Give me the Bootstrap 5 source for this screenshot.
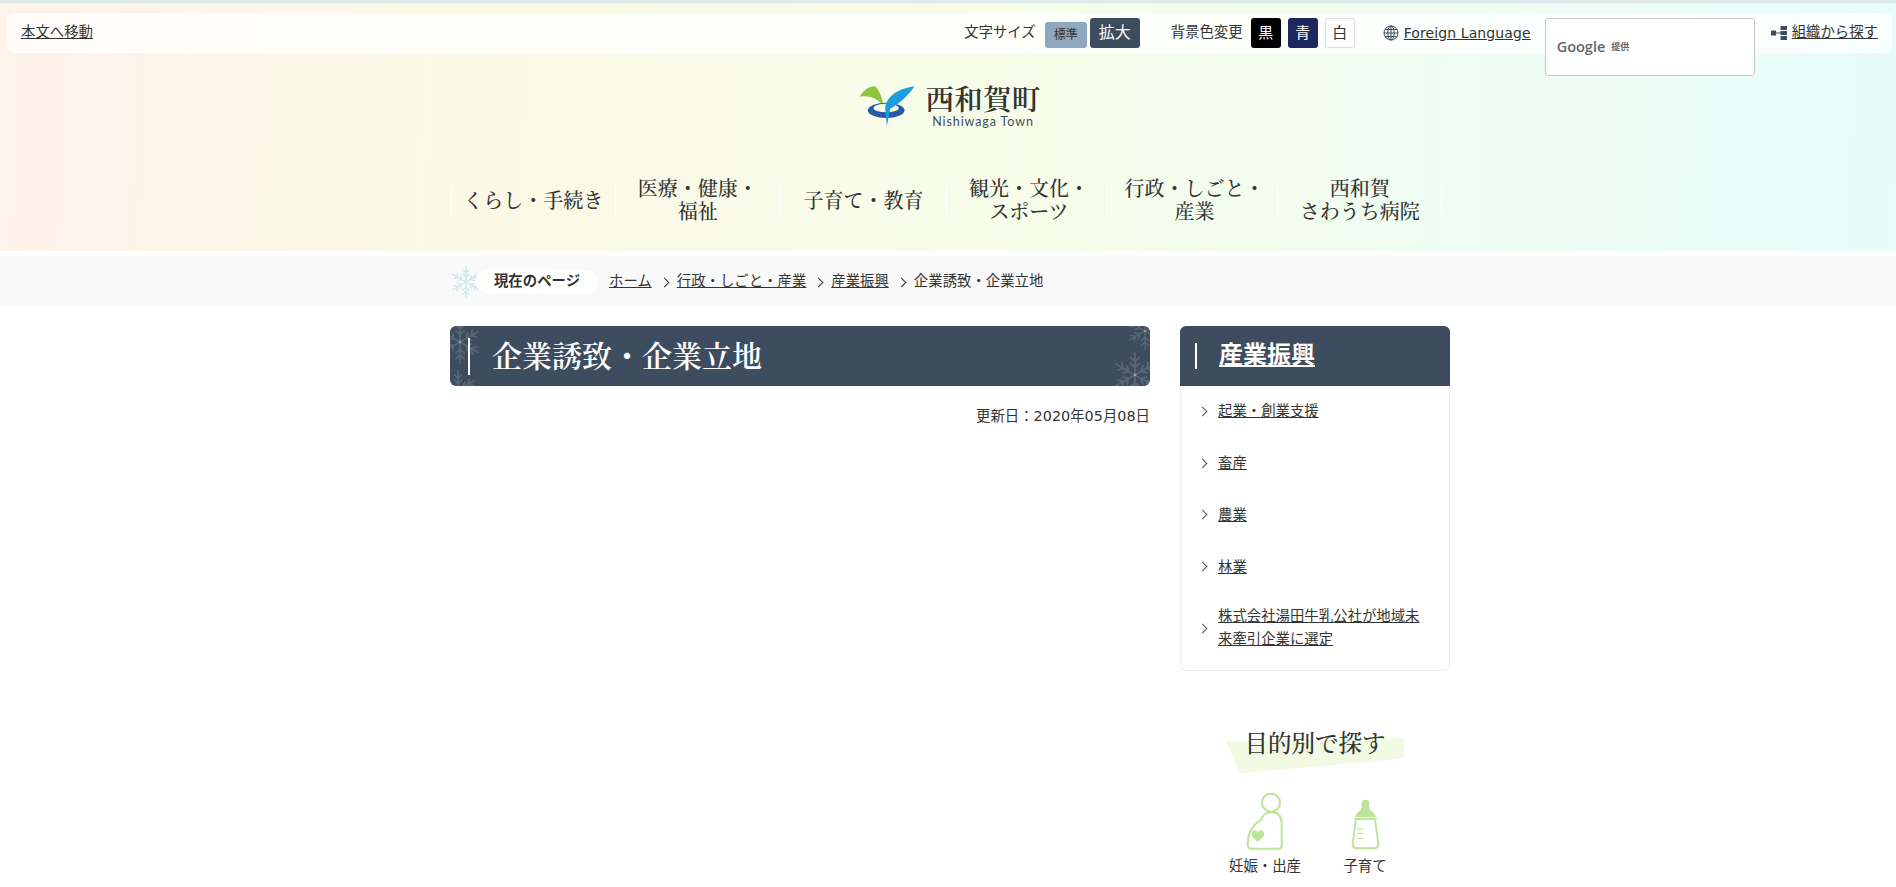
<!DOCTYPE html>
<html lang="ja">
<head>
  <meta charset="UTF-8" />
  <meta name="viewport" content="width=device-width, initial-scale=1.0"/>
  <title>企業誘致・企業立地 | 西和賀町</title>
  <link href="https://cdn.jsdelivr.net/npm/bootstrap@5.3.3/dist/css/bootstrap.min.css" rel="stylesheet" />
  <style>
    body { font-family: "DejaVu Sans", "Noto Sans CJK JP", sans-serif; font-size: 14.4px; color: #333; background: #fff; overflow-x: hidden; }
    a { color: #333; }
    .mincho { font-family: "Noto Serif CJK JP", "Liberation Serif", "Noto Sans CJK JP", serif; font-weight: 500; }

    .site-head { border-top: 3px solid #dcebea; height: 251px; padding-top: 10px; background: linear-gradient(92deg, #fff3ea 0%, #fbf9e6 25%, #f6fde9 55%, #e7fcfb 100%); }
    .util-bar { height: 40px; margin: 0 4px 0 7px; padding: 0 14px 0 14px; border-radius: 6px; background: rgba(255,255,255,.72); }
    .fs-group { margin-left: 9px; gap: 3px; height: 30px; }
    .fs-std, .fs-big, .bg-pick { display: flex; align-items: center; justify-content: center; border-radius: 3px; }
    .fs-std { width: 42px; height: 26px; background: #8fa7bf; font-size: 12px; color: #333; }
    .fs-big { width: 50px; height: 30px; background: #3d4d5f; color: #fff; font-size: 16px; }
    .bg-label { margin-left: 31px; }
    .bg-group { margin-left: 8px; gap: 7px; }
    .bg-pick { width: 30px; height: 30px; font-size: 15px; }
    .bg-black { background: #000; color: #fff; }
    .bg-navy { background: #1d2760; color: #fff; }
    .bg-white-btn { background: #fff; border: 1px solid #ddd; color: #333; }
    .lang-link { margin-left: 28px; gap: 5px; }
    .lang-link a { font-size: 14px; letter-spacing: .1px; }
    .search-box { width: 210px; height: 58px; margin: 5px 0 -23px 14px; padding-left: 11px; background: #fff; border: 1px solid #c8c8c8; border-radius: 3px; color: #666; gap: 6px; align-self: flex-start; }
    .search-box .g-word { font-family: "Open Sans", sans-serif; font-size: 14.5px; font-weight: 600; }
    .search-box .g-by { font-size: 9px; font-weight: 700; margin-top: 2px; }
    .org-link { margin-left: 16px; gap: 5px; }

    .logo-row { margin-top: 29px; height: 46px; gap: 8px; }
    .logo-name { font-size: 28.5px; line-height: 32px; font-weight: 600; color: #333; letter-spacing: .2px; }
    .logo-en { font-family: "Lato", sans-serif; font-size: 12.5px; line-height: 14px; letter-spacing: .9px; color: #3d4d5f; text-align: center; margin-top: 1px; }

    .page-wrap { width: 1000px; margin-left: calc(50% - 498px); }
    .gnav { margin-top: 58px; padding-left: 1px; }
    .gnav li { width: 165.6px; height: 31px; border-left: 1px solid #fff; display: flex; align-items: center; justify-content: center; text-align: center; font-size: 20px; line-height: 23px; color: #333; }
    .gnav li:first-child { width: 163.5px; }
    .gnav li:last-child { border-right: 1px solid #fff; }
    .gnav li span { display: block; padding: 0 0 5px; }

    .crumb-band { margin-top: 5px; height: 50px; background: #f9f9f9; padding-top: 1px; }
    .crumb-flake { width: 32px; height: 32px; color: #c9e8ea; }
    .crumb-title { margin-left: -6px; width: 122px; height: 23px; background: #fff; border-radius: 12px; font-weight: 700; font-size: 14.4px; display: flex; align-items: center; justify-content: center; }
    .crumb-band .breadcrumb { margin: 0 0 0 11px; --bs-breadcrumb-item-padding-x: 25px; }
    .crumb-band .breadcrumb-item { position: relative; }
    .crumb-band .breadcrumb-item + .breadcrumb-item::before { content: ""; position: absolute; left: 9px; top: 8px; padding: 0; width: 7px; height: 7px; border-top: 1.5px solid #333; border-right: 1.5px solid #333; transform: rotate(45deg); }
    .crumb-band .breadcrumb-item.active { color: #333; }

    .main-col { width: 700px; padding-top: 20px; }
    .side-col { width: 270px; padding-top: 20px; }
    .page-title { position: relative; height: 60px; margin: 0; background: #3d4d5f; border-radius: 6px; overflow: hidden; color: #fff; font-size: 30px; font-weight: 600; line-height: 56px; padding-left: 42px; }
    .page-title::before { content: ""; position: absolute; left: 18px; top: 12px; width: 2px; height: 37px; background: #fff; }
    .title-flake { position: absolute; color: rgba(255,255,255,.14); }
    .flake-a { left: -12px; top: -6px; width: 44px; height: 44px; }
    .flake-b { left: -12px; bottom: -24px; width: 40px; height: 40px; }
    .flake-c { right: -14px; top: -14px; width: 38px; height: 38px; }
    .flake-d { right: -8px; bottom: -12px; width: 46px; height: 46px; }
    .update-date { margin-top: 20px; text-align: right; font-size: 14.4px; line-height: 21px; }

    .side-box { border-radius: 6px; }
    .side-head { position: relative; height: 60px; background: #3d4d5f; border-radius: 6px 6px 0 0; padding-left: 39px; line-height: 58px; font-size: 24px; font-weight: 700; }
    .side-head::before { content: ""; position: absolute; left: 15px; top: 17px; width: 2px; height: 26px; background: #fff; }
    .side-head a { color: #fff; }
    .side-list { border: 1px solid #eee; border-top: 0; border-radius: 0 0 6px 6px; padding-bottom: 4px; }
    .side-list .list-group-item { border: 0; background: none; padding: 14.4px 20px 14.4px 37px; line-height: 23px; position: relative; }
    .side-list .list-group-item:last-child { padding-top: 12px; }
    .side-list .list-group-item::before { content: ""; position: absolute; left: 18px; top: 50%; width: 7px; height: 7px; margin-top: -4px; border-top: 1.5px solid #555; border-right: 1.5px solid #555; transform: rotate(45deg); }

    .purpose-head { position: relative; margin-top: 54px; text-align: center; font-size: 23.5px; line-height: 34px; color: #333; }
    .purpose-head span { position: relative; }
    .purpose-head::before { content: ""; position: absolute; left: 46px; top: 13px; width: 178px; height: 36px; background: #f2fae3; clip-path: polygon(0 11%, 100% 0, 100% 58%, 8% 100%); }
    .purpose-row { margin-top: 32px; }
    .purpose-item { width: 100px; text-align: center; }
    .purpose-icon { height: 60px; display: flex; align-items: flex-end; justify-content: center; }
    .purpose-label { margin-top: 5px; line-height: 20px; }
  </style>
</head>
<body>
  <svg width="0" height="0" class="d-block position-absolute">
    <defs>
      <g id="arm">
        <path d="M0 0V-48M0 -16L-9 -25M0 -16L9 -25M0 -29L-9 -38M0 -29L9 -38" fill="none" stroke="currentColor" stroke-width="4" stroke-linecap="round"/>
      </g>
      <symbol id="flake" viewBox="-50 -50 100 100">
        <use href="#arm"/>
        <use href="#arm" transform="rotate(60)"/>
        <use href="#arm" transform="rotate(120)"/>
        <use href="#arm" transform="rotate(180)"/>
        <use href="#arm" transform="rotate(240)"/>
        <use href="#arm" transform="rotate(300)"/>
      </symbol>
    </defs>
  </svg>

  <header class="site-head">
    <div class="util-bar d-flex align-items-center">
      <a href="#main">本文へ移動</a>
      <span class="ms-auto">文字サイズ</span>
      <div class="fs-group d-flex align-items-end">
        <span class="fs-std">標準</span>
        <span class="fs-big">拡大</span>
      </div>
      <span class="bg-label">背景色変更</span>
      <div class="bg-group d-flex">
        <span class="bg-pick bg-black">黒</span>
        <span class="bg-pick bg-navy">青</span>
        <span class="bg-pick bg-white-btn">白</span>
      </div>
      <div class="lang-link d-flex align-items-center">
        <svg width="16" height="16" viewBox="0 0 16 16" fill="none" stroke="#3d4d5f" stroke-width="1"><circle cx="8" cy="8" r="7"/><ellipse cx="8" cy="8" rx="3.2" ry="7"/><path d="M1 8H15M2 4.5H14M2 11.5H14M8 1V15"/></svg>
        <a href="#">Foreign Language</a>
      </div>
      <div class="search-box d-flex align-items-center">
        <span class="g-word">Google</span><span class="g-by">提供</span>
      </div>
      <div class="org-link d-flex align-items-center">
        <svg width="16" height="16" viewBox="0 0 16 16" fill="#3d4d5f"><rect x="0" y="5.5" width="5" height="5"/><rect x="5" y="7.5" width="5" height="1"/><rect x="9.5" y="1" width="6.5" height="4"/><rect x="9.5" y="6" width="6.5" height="4"/><rect x="9.5" y="11" width="6.5" height="4"/></svg>
        <a href="#">組織から探す</a>
      </div>
    </div>

    <div class="logo-row d-flex justify-content-center align-items-center">
      <svg width="62" height="45" viewBox="50 35 185 135">
        <path d="M60 76C75 52 95 44 107 45C122 60 130 85 132 104C118 84 92 70 60 76Z" fill="#8cc63f"/>
        <ellipse cx="140" cy="117" rx="55" ry="23" fill="#2a59a8"/>
        <ellipse cx="140" cy="110" rx="38" ry="13" fill="#f6fbe8"/>
        <path d="M225 45C205 75 175 100 152 112L142 165L137 110C140 85 160 55 225 45Z" fill="#1d9ee0"/>
      </svg>
      <div>
        <div class="logo-name mincho">西和賀町</div>
        <div class="logo-en">Nishiwaga Town</div>
      </div>
    </div>

    <ul class="gnav page-wrap list-unstyled d-flex mincho">
      <li><span>くらし・手続き</span></li>
      <li><span>医療・健康・<br>福祉</span></li>
      <li><span>子育て・教育</span></li>
      <li><span>観光・文化・<br>スポーツ</span></li>
      <li><span>行政・しごと・<br>産業</span></li>
      <li><span>西和賀<br>さわうち病院</span></li>
    </ul>
  </header>

  <div class="crumb-band">
    <div class="page-wrap d-flex align-items-center h-100">
      <svg class="crumb-flake"><use href="#flake"/></svg>
      <div class="crumb-title">現在のページ</div>
      <ol class="breadcrumb">
        <li class="breadcrumb-item"><a href="#">ホーム</a></li>
        <li class="breadcrumb-item"><a href="#">行政・しごと・産業</a></li>
        <li class="breadcrumb-item"><a href="#">産業振興</a></li>
        <li class="breadcrumb-item active">企業誘致・企業立地</li>
      </ol>
    </div>
  </div>

  <div class="page-wrap d-flex justify-content-between" id="main">
    <main class="main-col">
      <h1 class="page-title mincho">
        <svg class="title-flake flake-a"><use href="#flake"/></svg>
        <svg class="title-flake flake-b"><use href="#flake"/></svg>
        <svg class="title-flake flake-c"><use href="#flake"/></svg>
        <svg class="title-flake flake-d"><use href="#flake"/></svg>
        企業誘致・企業立地
      </h1>
      <p class="update-date">更新日：2020年05月08日</p>
    </main>

    <aside class="side-col">
      <div class="side-box">
        <div class="side-head"><a href="#">産業振興</a></div>
        <div class="side-list list-group list-group-flush">
          <div class="list-group-item"><a href="#">起業・創業支援</a></div>
          <div class="list-group-item"><a href="#">畜産</a></div>
          <div class="list-group-item"><a href="#">農業</a></div>
          <div class="list-group-item"><a href="#">林業</a></div>
          <div class="list-group-item"><a href="#">株式会社湯田牛乳公社が地域未来牽引企業に選定</a></div>
        </div>
      </div>

      <div class="purpose-head mincho"><span>目的別で探す</span></div>
      <div class="purpose-row d-flex justify-content-center">
        <div class="purpose-item">
          <div class="purpose-icon">
            <svg width="40" height="60" viewBox="135 240 120 180" fill="none" stroke="#bce49a" stroke-width="6">
              <circle cx="213" cy="275" r="27"/>
              <path d="M185 325Q190 304 215 304Q245 304 245 340V405Q245 413 237 413H155Q143 413 143 400Q143 350 185 325Z"/>
              <path d="M173 393L155 375Q152 358 165 358Q172 358 173 366Q175 358 182 358Q195 358 192 375Z" fill="#bce49a" stroke="none"/>
            </svg>
          </div>
          <div class="purpose-label">妊娠・出産</div>
        </div>
        <div class="purpose-item">
          <div class="purpose-icon">
            <svg width="33" height="53" viewBox="445 255 100 160" fill="none" stroke="#bce49a" stroke-width="6">
              <circle cx="495" cy="272" r="12" fill="#bce49a" stroke="none"/>
              <path d="M484 280H506L510 292Q522 298 526 312H464Q468 298 480 292Z" fill="#bce49a" stroke="none"/>
              <path d="M461 318H529" stroke-width="7"/>
              <path d="M466 322L456 392Q455 407 469 407H521Q535 407 534 392L524 322"/>
              <path d="M470 348H488M470 362H488M470 377H488" stroke-width="4"/>
            </svg>
          </div>
          <div class="purpose-label">子育て</div>
        </div>
      </div>
    </aside>
  </div>

  <script src="https://cdn.jsdelivr.net/npm/bootstrap@5.3.3/dist/js/bootstrap.bundle.min.js"></script>
</body>
</html>
